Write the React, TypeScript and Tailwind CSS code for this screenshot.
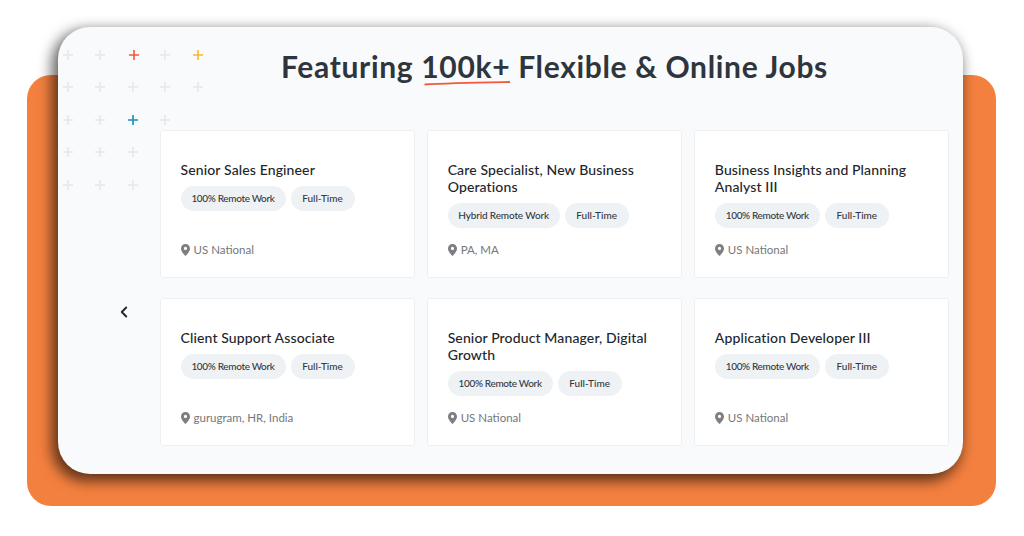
import { ChevronLeft } from "lucide-react";

interface Job {
  title: string;
  remote: string;
  location: string;
}

const jobs: Job[] = [
  { title: "Senior Sales Engineer", remote: "100% Remote Work", location: "US National" },
  { title: "Care Specialist, New Business Operations", remote: "Hybrid Remote Work", location: "PA, MA" },
  { title: "Business Insights and Planning Analyst III", remote: "100% Remote Work", location: "US National" },
  { title: "Client Support Associate", remote: "100% Remote Work", location: "gurugram, HR, India" },
  { title: "Senior Product Manager, Digital Growth", remote: "100% Remote Work", location: "US National" },
  { title: "Application Developer III", remote: "100% Remote Work", location: "US National" },
];

const plusRows = [
  [68, 100, 134, 165, 198],
  [68, 100, 133, 165, 198],
  [68, 100, 133, 165],
  [68, 100, 133],
  [68, 100, 133],
];
const plusY = [55, 87, 120, 152, 185];

function plusColor(x: number, y: number) {
  if (x === 134 && y === 55) return "#f4583a";
  if (x === 198 && y === 55) return "#fbb731";
  if (x === 133 && y === 120) return "#1b8dbb";
  return "#e7e8ea";
}

function PlusField() {
  return (
    <svg className="absolute left-0 top-0" width="210" height="200" viewBox="58 27 210 200" fill="none">
      {plusRows.map((row, i) =>
        row.map((x) => (
          <path
            key={`${x}-${i}`}
            d={`M${x - 5} ${plusY[i]}h10M${x} ${plusY[i] - 5}v10`}
            stroke={plusColor(x, plusY[i])}
            strokeWidth="1.6"
          />
        ))
      )}
    </svg>
  );
}

function Pin() {
  return (
    <svg width="9" height="12" viewBox="0 0 9 12" className="shrink-0">
      <path
        fillRule="evenodd"
        d="M4.5 0C2 0 0 2 0 4.4 0 7.4 3.2 10.600 4.500 12 5.800 10.600 9 7.400 9 4.400 9 2 7 0 4.500 0Zm0 6a1.600 1.600 0 1 1 0-3.200 1.600 1.600 0 0 1 0 3.200Z"
        fill="#7d7f83"
      />
    </svg>
  );
}

function JobCard({ job }: { job: Job }) {
  const hybrid = job.remote.startsWith("Hybrid");
  return (
    <div className="flex h-[148px] flex-col rounded-[3px] border border-[#eeeff0] bg-white pl-[19.5px] pr-[12px] pt-[30px] pb-[20px]">
      <h3 className="text-[14px] font-medium leading-[17px] tracking-[0.13px] text-[#22262b]">{job.title}</h3>
      <div className="mt-[8px] flex gap-[5px]">
        <span
          className={
            hybrid
              ? "flex h-[25px] w-[112px] items-center justify-center rounded-full bg-[#eff2f5] text-[10px] font-medium tracking-[-0.15px] text-[#33383e]"
              : "flex h-[25px] w-[105px] items-center justify-center rounded-full bg-[#eff2f5] text-[10px] font-medium tracking-[-0.35px] text-[#33383e]"
          }
        >
          {job.remote}
        </span>
        <span className="flex h-[25px] w-[64px] items-center justify-center rounded-full bg-[#eff2f5] text-[10px] font-medium text-[#33383e]">
          Full-Time
        </span>
      </div>
      <div className="mt-auto flex items-center gap-[4px] text-[11.5px] leading-[14px] text-[#74777b]">
        <Pin />
        {job.location}
      </div>
    </div>
  );
}

export default function App() {
  return (
    <div className="h-[536px] w-[1024px] overflow-hidden bg-white pl-[27px] pt-[75px] font-['Lato',sans-serif]">
      <div className="flex h-[431px] w-[969px] items-start rounded-[24px] bg-[#f4803f]">
        <div className="relative ml-[31px] mt-[-48px] h-[447px] w-[905px] rounded-[32px] bg-[#f9fafc] pl-[102px] pr-[14px] shadow-[-4px_5px_14px_2px_rgba(0,0,0,0.62)]">
          <PlusField />
          <h1 className="relative pt-[17px] text-center text-[30px] font-bold leading-[44px] tracking-[0.66px] text-[#2f353c]">
            Featuring{" "}
            <span className="relative">
              100k+
              <svg className="absolute left-[3px] top-[33px]" width="87" height="5" viewBox="0 0 87 5" fill="none">
                <path d="M0.500 3.500C25 2 58 1.500 86 1" stroke="#f4583a" strokeWidth="1.800" />
              </svg>
            </span>{" "}
            Flexible &amp; Online Jobs
          </h1>
          <div className="mt-[42px] grid grid-cols-3 gap-x-[12.5px] gap-y-[20px]">
            {jobs.map((job) => (
              <JobCard key={job.title} job={job} />
            ))}
          </div>
          <ChevronLeft className="absolute left-[57px] top-[276px] h-[18px] w-[18px] text-[#22262b]" strokeWidth={2.500} />
        </div>
      </div>
    </div>
  );
}
